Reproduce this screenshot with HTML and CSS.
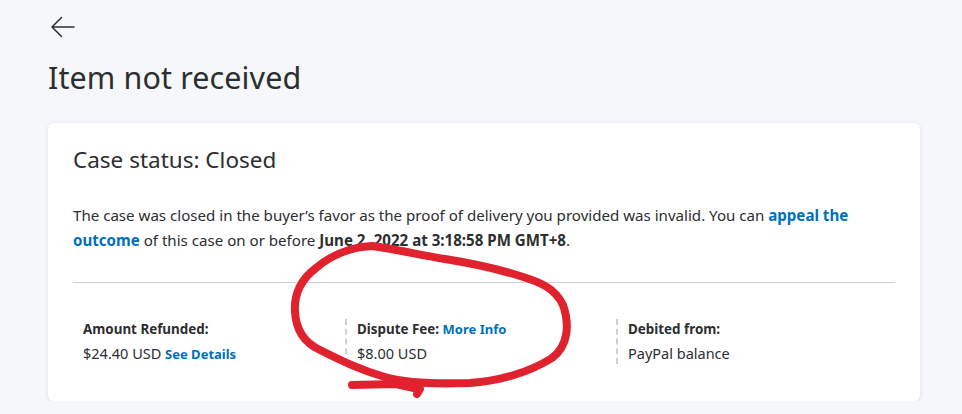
FILE: index.html
```html
<!DOCTYPE html>
<html lang="en">
<head>
<meta charset="utf-8">
<title>Item not received</title>
<link rel="stylesheet" href="styles.css">
</head>
<body>
<div class="page">
  <a class="back" href="#" aria-label="Back">
    <svg width="26" height="22" viewBox="0 0 26 22"><path d="M24 11H2M11.5 1.5L2 11l9.5 9.5" fill="none" stroke="#2c2e2f" stroke-width="1.5" stroke-linecap="round" stroke-linejoin="round"/></svg>
  </a>
  <h1 class="title">Item not received</h1>
  <section class="card">
    <h2 class="status">Case status: Closed</h2>
    <p class="desc">The case was closed in the buyer’s favor as the proof of delivery you provided was invalid. You can <a class="link" href="#">appeal the</a> <a class="link" href="#">outcome</a> of this case on or before <strong>June 2, 2022 at 3:18:58 PM GMT+8</strong>.</p>
    <div class="divider"></div>
    <div class="facts">
      <div class="fact">
        <div class="label">Amount Refunded:</div>
        <div class="value">$24.40 USD <a class="small-link" href="#">See Details</a></div>
      </div>
      <div class="fact sep">
        <div class="label">Dispute Fee: <a class="small-link" href="#">More Info</a></div>
        <div class="value">$8.00 USD</div>
      </div>
      <div class="fact sep">
        <div class="label">Debited from:</div>
        <div class="value">PayPal balance</div>
      </div>
    </div>
  </section>
</div>
<svg class="scribble" width="962" height="414" viewBox="0 0 962 414">
  <path d="M372 246 C350 247 330 256 316 268 C300 280 294 296 295 312 C296 330 305 343 320 350 C340 360 360 370 385 377 C410 384 440 384 470 383 C500 381 530 372 552 358 C568 346 570 325 563 305 C555 288 540 282 520 276 C495 268 470 263 445 259 C420 255 395 249 372 246 Z" fill="none" stroke="#e0222f" stroke-width="8" stroke-linecap="round" stroke-linejoin="round"/>
  <path d="M352 385 L395 384 C405 386 412 388 420 389 L417 394" fill="none" stroke="#e0222f" stroke-width="8" stroke-linecap="round" stroke-linejoin="round"/>
</svg>
</body>
</html>
```
FILE: styles.css
```css
html, body {
  margin: 0;
  padding: 0;
  background: #f5f7fa;
  font-family: "Noto Sans", "Open Sans", "Liberation Sans", sans-serif;
  color: #2c2e2f;
}
.page {
  padding: 16px 42px 0 48px;
}
.back {
  display: inline-flex;
  margin-left: 2px;
  height: 22px;
}
.title {
  margin: 15px 0 27px 0;
  font-size: 30.5px;
  font-weight: 400;
  line-height: 38px;
  letter-spacing: 0.1px;
}
.card {
  background: #fff;
  border-radius: 6px;
  box-shadow: 0 1px 4px rgba(0, 0, 0, 0.10);
  padding: 22px 25px 37px 25px;
}
.status {
  margin: 0;
  font-size: 22.5px;
  font-weight: 400;
  line-height: 30px;
}
.desc {
  margin: 28px 0 0 0;
  font-size: 15.1px;
  line-height: 25px;
}
.desc strong { font-weight: 700; }
.link {
  color: #0070ba;
  font-weight: 700;
  text-decoration: none;
}
.divider {
  height: 1px;
  background: #cbd2d6;
  margin-top: 29px;
}
.facts {
  display: grid;
  grid-template-columns: 272px 271px 1fr;
  margin-top: 36px;
}
.fact {
  padding-left: 10px;
  display: flex;
  flex-direction: column;
  gap: 4px;
}
.fact.sep {
  border-left: 2px dashed #cbd2d6;
}
.label {
  font-size: 13.4px;
  font-weight: 700;
  line-height: 20px;
}
.value {
  font-size: 14.5px;
  line-height: 20px;
}
.small-link {
  color: #0070ba;
  font-weight: 700;
  font-size: 13px;
  text-decoration: none;
}
.scribble {
  position: absolute;
  left: 0;
  top: 0;
  pointer-events: none;
}
```
